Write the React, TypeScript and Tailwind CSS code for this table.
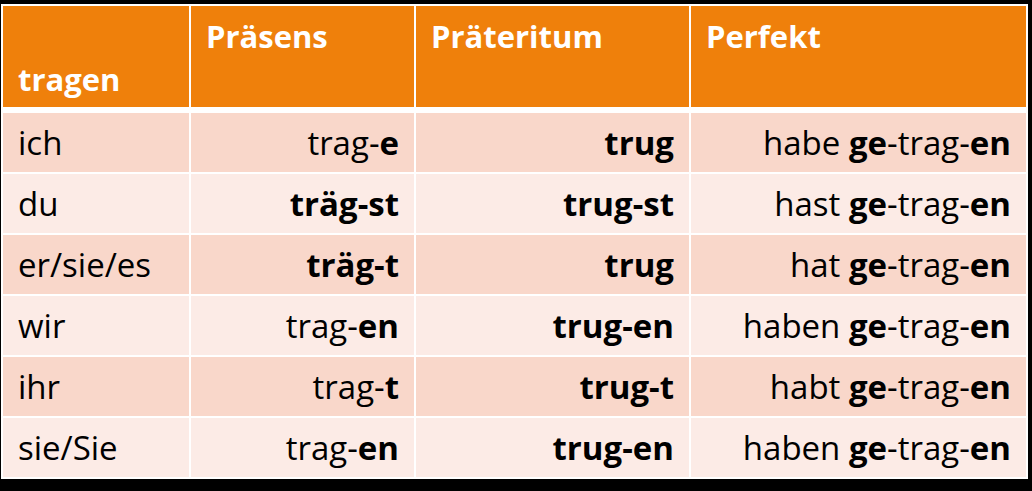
const rows: { p: string; pre: React.ReactNode; prt: React.ReactNode; perf: React.ReactNode }[] = [
  {
    p: "ich",
    pre: <>trag-<b>e</b></>,
    prt: <b>trug</b>,
    perf: <>habe <b>ge</b>-trag-<b>en</b></>,
  },
  {
    p: "du",
    pre: <b>träg-st</b>,
    prt: <b>trug-st</b>,
    perf: <>hast <b>ge</b>-trag-<b>en</b></>,
  },
  {
    p: "er/sie/es",
    pre: <b>träg-t</b>,
    prt: <b>trug</b>,
    perf: <>hat <b>ge</b>-trag-<b>en</b></>,
  },
  {
    p: "wir",
    pre: <>trag-<b>en</b></>,
    prt: <b>trug-en</b>,
    perf: <>haben <b>ge</b>-trag-<b>en</b></>,
  },
  {
    p: "ihr",
    pre: <>trag-<b>t</b></>,
    prt: <b>trug-t</b>,
    perf: <>habt <b>ge</b>-trag-<b>en</b></>,
  },
  {
    p: "sie/Sie",
    pre: <>trag-<b>en</b></>,
    prt: <b>trug-en</b>,
    perf: <>haben <b>ge</b>-trag-<b>en</b></>,
  },
];

export default function App() {
  return (
    <div className="h-[491px] w-[1032px] bg-black pl-px pt-1 font-['Open_Sans','Lato',sans-serif] leading-none">
      <div className="w-[1027px] bg-white p-[2px]">
        <div className="grid grid-cols-[186px_223px_273px_335px] gap-x-[2px] text-[31px]">
          <div className="flex h-[101px] items-end bg-[#ef800b] px-[15px] pb-[12px] font-bold text-white">tragen</div>
          <div className="h-[101px] bg-[#ef800b] px-[15px] pt-[15px] font-bold text-white">Präsens</div>
          <div className="h-[101px] bg-[#ef800b] px-[15px] pt-[15px] font-bold text-white">Präteritum</div>
          <div className="h-[101px] bg-[#ef800b] px-[15px] pt-[15px] font-bold text-white">Perfekt</div>
        </div>
        <div className="mt-[6px] flex flex-col gap-y-[2px] text-[33px]">
          {rows.map((r, i) => (
            <div key={r.p} className="grid grid-cols-[186px_223px_273px_335px] gap-x-[2px] text-black">
              {[r.p, r.pre, r.prt, r.perf].map((c, j) => (
                <div
                  key={j}
                  className={
                    (i % 2 === 0 ? "bg-[#f9d7ca] " : "bg-[#fcebe6] ") +
                    (j === 0 ? "justify-start " : "justify-end ") +
                    "flex h-[59px] items-center whitespace-pre px-[15px]"
                  }
                >
                  <span>{c}</span>
                </div>
              ))}
            </div>
          ))}
        </div>
      </div>
    </div>
  );
}
